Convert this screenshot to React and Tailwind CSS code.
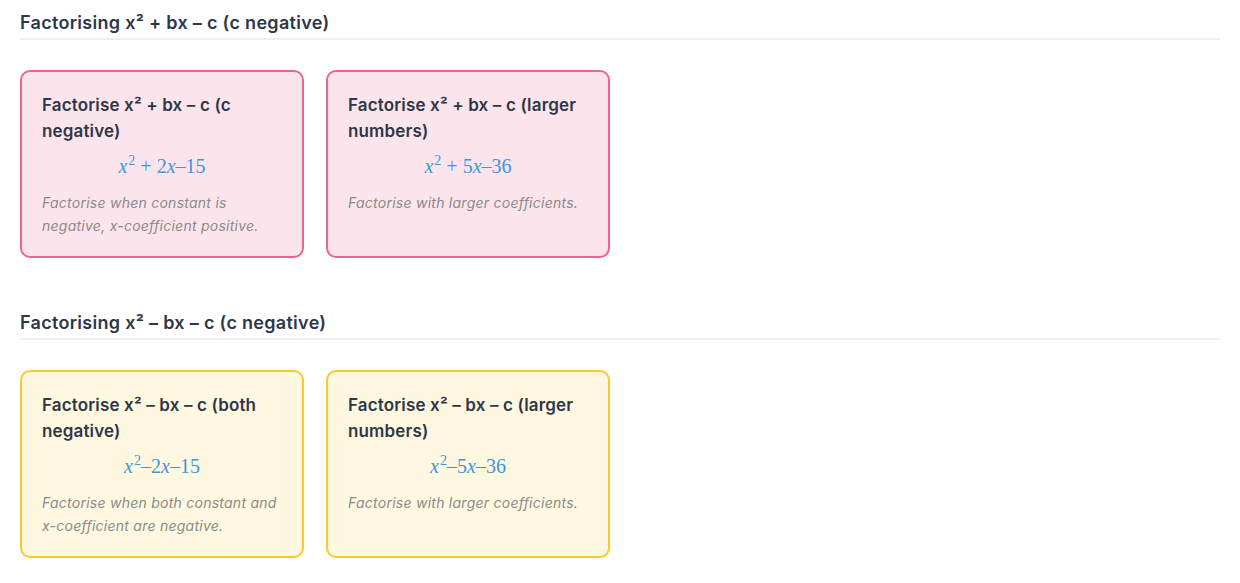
import React from "react";

const sections = [
    {
        title: "Factorising x² + bx – c (c negative)",
        tone: "pink",
        cards: [
            {
                title: "Factorise x² + bx – c (c negative)",
                math: { b: "2", c: "15", sign: "+" },
                desc: "Factorise when constant is negative, x-coefficient positive.",
            },
            {
                title: "Factorise x² + bx – c (larger numbers)",
                math: { b: "5", c: "36", sign: "+" },
                desc: "Factorise with larger coefficients.",
            },
        ],
    },
    {
        title: "Factorising x² – bx – c (c negative)",
        tone: "yellow",
        cards: [
            {
                title: "Factorise x² – bx – c (both negative)",
                math: { b: "2", c: "15", sign: "–" },
                desc: "Factorise when both constant and x-coefficient are negative.",
            },
            {
                title: "Factorise x² – bx – c (larger numbers)",
                math: { b: "5", c: "36", sign: "–" },
                desc: "Factorise with larger coefficients.",
            },
        ],
    },
];

const Math = ({ b, c, sign }) => (
    <div className="h-[28px] text-center text-[20px] leading-[28px] text-[#3b97dd] font-['Liberation_Serif',serif] mt-[8px]">
        <span className="italic">x</span>
        <span className="text-[14px] leading-none relative top-[-8px] ml-[1px]">2</span>
        {sign === "+" ? <span className="mx-[5px]">+</span> : <span>–</span>}
        <span>{b}</span>
        <span className="italic">x</span>
        <span>–{c}</span>
    </div>
);

const Card = ({ card, tone }) => (
    <div
        className={`w-[284px] h-[188px] rounded-[10px] border-2 px-[20px] py-[20px] ${
            tone === "pink" ? "bg-[#fce4ec] border-[#f06292]" : "bg-[#fff8e1] border-[#fbc92c]"
        }`}
    >
        <h3 className="text-[17px] leading-[26px] font-semibold tracking-[0.15px] text-[#2d3748]">{card.title}</h3>
        <Math {...card.math} />
        <p className="mt-[11px] text-[14px] leading-[23px] italic tracking-[0.25px] text-[#8a8a8a]">{card.desc}</p>
    </div>
);

export default function App() {
    return (
        <div className="px-[20px] bg-white min-h-screen font-['Inter',sans-serif]">
            {sections.map((s, i) => (
                <section key={s.title} className={i === 0 ? "pt-[9px]" : "pt-[51px]"}>
                    <h2 className="text-[18px] leading-[28px] font-semibold tracking-[0.3px] text-[#2d3748] pb-[1px] border-b-2 border-[#eeeeee]">
                        {s.title}
                    </h2>
                    <div className="flex gap-[22px] mt-[30px]">
                        {s.cards.map((c) => (
                            <Card key={c.title} card={c} tone={s.tone} />
                        ))}
                    </div>
                </section>
            ))}
        </div>
    );
}
